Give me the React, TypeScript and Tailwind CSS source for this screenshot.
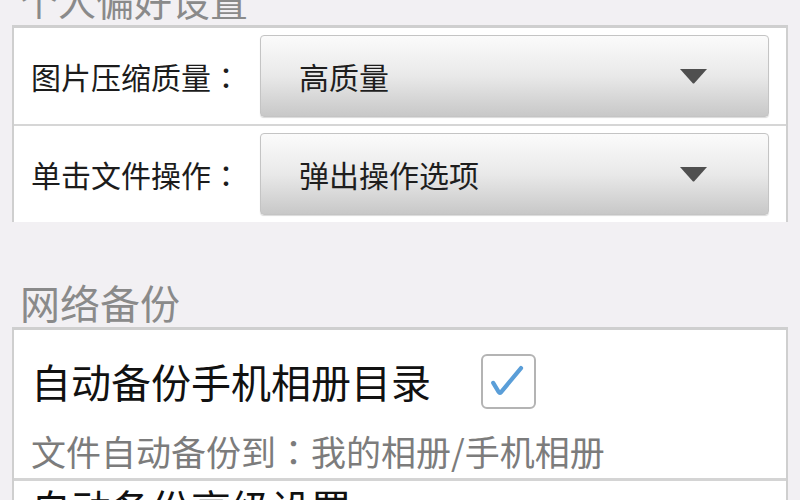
import React from "react";

const font = "font-['Noto_Sans_CJK_SC','Noto_Sans',sans-serif]";

// centred full-width colon, as the reference draws it
function Colon() {
  return <span className="font-['Noto_Sans_CJK_TC',sans-serif]">：</span>;
}

function Arrow() {
  return (
    <svg width="29" height="16" viewBox="0 0 29 16">
      <path d="M1 1 L28 1 L15.5 15 Q14.5 16 13.5 15 Z" fill="#4f4f4f" />
    </svg>
  );
}

function SelectRow(props: { label: string; value: string }) {
  return (
    <div className="flex h-[96px] items-center">
      <div className="w-[246px] pl-[17px] text-[30px] leading-none text-[#1c1c1c]">
        {props.label}
        <Colon />
      </div>
      <div className="mr-[17px] flex h-[82px] flex-1 items-center justify-between rounded-[4px] border border-[#c4c4c4] bg-gradient-to-b from-[#fbfbfb] via-[#e9e9e9] to-[#c8c8c8] pl-[38px] pr-[60px] shadow-[0_1px_1px_rgba(0,0,0,0.15)]">
        <span className="text-[30px] leading-none text-[#1e1e1e]">
          {props.value}
        </span>
        <Arrow />
      </div>
    </div>
  );
}

function CheckBox() {
  return (
    <div className="flex h-[55px] w-[55px] items-center justify-center rounded-[6px] border-2 border-[#b4b4b4] bg-white">
      <svg width="55" height="55" viewBox="0 0 55 55">
        <path
          d="M11 29 L17 39 Q18 40.5 19.5 39 L41 13"
          fill="none"
          stroke="#5a9ed8"
          strokeWidth="4.5"
          strokeLinecap="round"
          strokeLinejoin="round"
        />
      </svg>
    </div>
  );
}

export default function App() {
  return (
    <div className={`h-[500px] w-[800px] overflow-hidden bg-[#f2f0f3] ${font}`}>
      <div className="-mt-[22px] mb-[3px] pl-[20px] text-[38px] leading-[44px] text-[#8a8a8a]">
        个人偏好设置
      </div>

      <div className="mx-[12px] border-x-2 border-t-[3px] border-[#cfcfcf] bg-white">
        <SelectRow label="图片压缩质量" value="高质量" />
        <div className="h-[2px] bg-[#d6d6d6]" />
        <SelectRow label="单击文件操作" value="弹出操作选项" />
      </div>

      <div className="mb-[1px] pl-[20px] pt-[56px] text-[40px] leading-[48px] text-[#8a8a8a]">
        网络备份
      </div>

      <div className="mx-[12px] border-x-2 border-t-[3px] border-[#cfcfcf] bg-white">
        <div className="pb-[7px] pl-[17px] pt-[23px]">
          <div className="flex h-[56px] items-center gap-[50px]">
            <span className="text-[40px] leading-[56px] text-[#111]">
              自动备份手机相册目录
            </span>
            <CheckBox />
          </div>
          <div className="mt-[22px] text-[35px] leading-[40px] text-[#7c7c7c]">
            文件自动备份到
            <Colon />
            我的相册/手机相册
          </div>
        </div>
        <div className="h-[3px] bg-[#d4d4d4]" />
        <div className="pl-[17px] text-[40px] leading-[52px] text-[#111]">
          自动备份高级设置
        </div>
      </div>
    </div>
  );
}
